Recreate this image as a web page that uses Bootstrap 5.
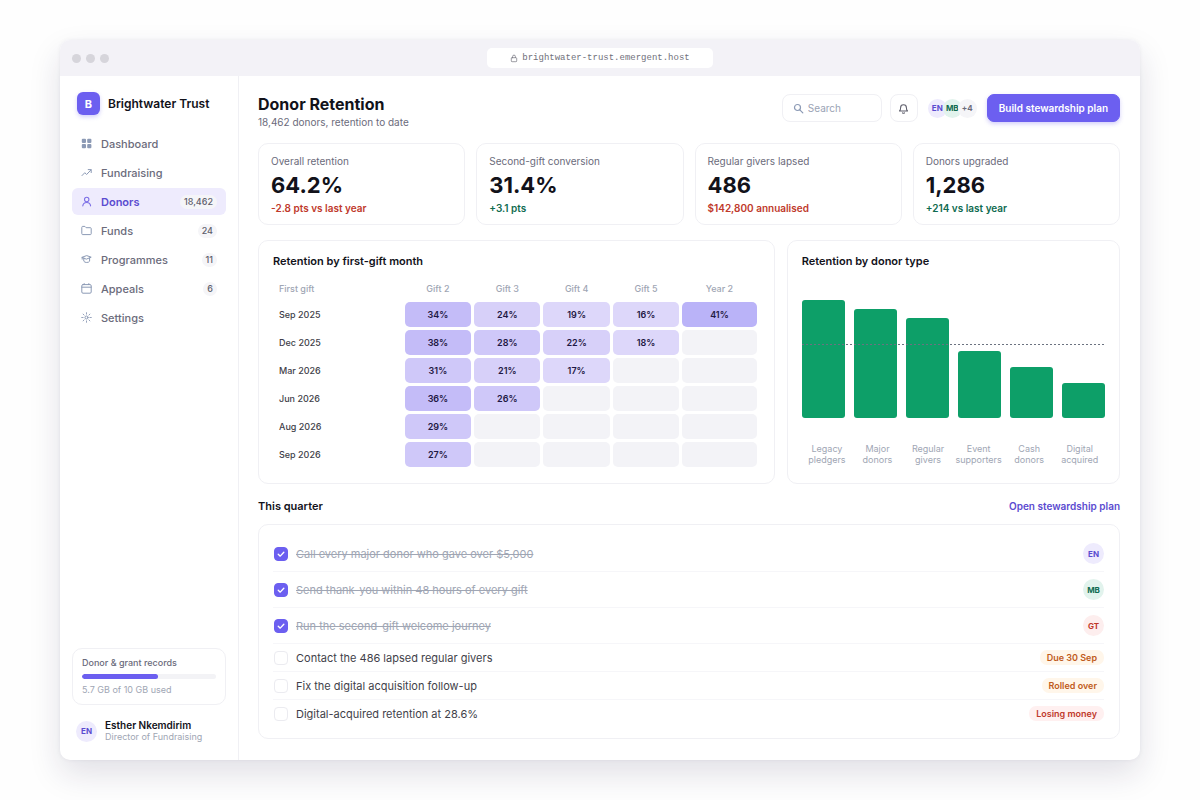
<!DOCTYPE html>
<html lang="en">
<head>
  <meta charset="UTF-8">
  <meta name="viewport" content="width=device-width, initial-scale=1.0">
  <title>Donor Retention - Brightwater Trust</title>
  <link rel="stylesheet" href="https://cdn.jsdelivr.net/npm/bootstrap@5.3.0/dist/css/bootstrap.min.css">
  <style>
    :root {
      --ink: #12121a;
      --body-ink: #3f3f4a;
      --soft: #6b6b7b;
      --muted: #a0a6b4;
      --line: #f0f0f4;
      --accent: #6c5ff0;
      --accent-ink: #5b4bd0;
      --accent-bg: #eeebfd;
      --green: #0f6b50;
      --red: #c0392b;
    }
    body {
      font-family: Inter, "Liberation Sans", sans-serif;
      font-size: 11px;
      line-height: 14px;
      color: var(--ink);
      background: #fefefe;
      padding: 40px 60px;
    }
    a { text-decoration: none; }
    svg { display: block; flex: none; }
    .ico { fill: none; stroke: currentColor; stroke-width: 1.2; stroke-linecap: round; stroke-linejoin: round; }

    /* browser window */
    .window {
      min-height: calc(100vh - 80px);
      border-radius: 10px;
      box-shadow: 0 14px 32px rgba(30, 20, 70, .13), 0 0 4px rgba(30, 20, 70, .06);
    }
    .titlebar { background: #f3f2f7; height: 36px; padding: 0 12px; }
    .titlebar > div { flex: 1; }
    .lights { gap: 5px; }
    .light { width: 9px; height: 9px; background: #d6d5db; }
    .address {
      font-family: "Liberation Mono", monospace;
      font-size: 9px;
      color: #71717c;
      width: 226px;
      height: 20px;
      border-radius: 5px;
    }

    /* sidebar */
    .sidebar { width: 179px; border-right: 1px solid var(--line); padding: 16px 12px 17px; }
    .brand, .user { padding: 0 5px; }
    .logo {
      width: 23px;
      height: 23px;
      border-radius: 6px;
      background: var(--accent);
      box-shadow: 0 2px 4px rgba(108, 95, 240, .3);
    }
    .org { font-size: 12px; font-weight: 600; }
    .side-nav { gap: 2px; margin-top: 15px; }
    .side-nav a {
      height: 27px;
      padding: 0 9px;
      gap: 9px;
      border-radius: 6px;
      color: var(--soft);
      font-weight: 500;
    }
    .side-nav svg { color: #8c9ab5; }
    .side-nav a.active { background: var(--accent-bg); color: var(--accent-ink); font-weight: 600; }
    .side-nav a.active svg { color: #7d70e6; }
    .count { background: #f5f5f8; color: #5f5f6c; font-size: 9px; font-weight: 500; padding: 0 4px; border-radius: 7px; }
    .box { border: 1px solid var(--line); border-radius: 10px; }
    .storage { padding: 7px 9px; }
    .storage .progress { height: 5px; background: #f3f3f6; margin: 4px 0; }
    .storage .progress-bar { background: var(--accent); border-radius: 3px; }
    .user { margin-top: 14px; line-height: 12px; }
    .user-name { font-size: 10px; font-weight: 600; }
    .tiny { font-size: 9px; }
    .text-soft { color: var(--soft); }
    .text-muted2 { color: var(--muted); }

    .avatar {
      width: 21px;
      height: 21px;
      border-radius: 50%;
      font-size: 8px;
      font-weight: 700;
      flex: none;
    }
    .user .avatar { margin-left: -1px; }
    .av-violet { background: var(--accent-bg); color: var(--accent-ink); }
    .av-green { background: #e2f3ed; color: var(--green); }
    .av-red { background: #fdeeee; color: var(--red); }
    .av-gray { background: #f5f5f8; color: var(--soft); }
    .stack { height: 28px; margin: 0 2px; }
    .stack .avatar { width: 19px; height: 19px; }
    .stack .avatar + .avatar { margin-left: -4px; }

    /* page header */
    .content { padding: 18px 20px 20px 19px; min-width: 0; }
    h1 { font-size: 16px; line-height: 21px; font-weight: 700; }
    h2 { font-size: 11px; line-height: 14px; font-weight: 600; }
    .sub { font-size: 10px; }
    .search { width: 100px; height: 28px; border-radius: 8px; padding: 0 10px; color: #8c9ab5; }
    .search input { border: 0; outline: 0; padding: 0; min-width: 0; width: 100%; background: none; font-size: 10px; }
    .search input::placeholder { color: #9aa3b5; opacity: 1; }
    .bell { width: 28px; height: 28px; padding: 0; border-radius: 8px; color: #5f5f6c; background: #fff; }
    .btn-plan {
      --bs-btn-color: #fff;
      --bs-btn-bg: var(--accent);
      --bs-btn-border-color: var(--accent);
      --bs-btn-hover-color: #fff;
      --bs-btn-hover-bg: var(--accent-ink);
      --bs-btn-font-size: 10px;
      --bs-btn-font-weight: 600;
      --bs-btn-line-height: 14px;
      --bs-btn-padding-x: 11px;
      --bs-btn-padding-y: 6px;
      --bs-btn-border-radius: 7px;
      box-shadow: 0 2px 4px rgba(108, 95, 240, .3);
    }

    /* key figures */
    .stats { display: grid; grid-template-columns: repeat(4, 1fr); gap: 11px; margin-top: 14px; }
    .stat { padding: 10px 12px 9px; font-size: 10px; }
    .stat strong { display: block; font-size: 22px; line-height: 27px; margin: 4px 0 2px; }
    .down { color: var(--red); font-weight: 600; }
    .up { color: var(--green); font-weight: 600; }

    .panels { display: grid; grid-template-columns: 31fr 20fr; gap: 12px; margin-top: 15px; }
    .panel { padding: 13px 14px; min-width: 0; }

    /* cohort table */
    .cohort { width: 100%; table-layout: fixed; border-collapse: separate; border-spacing: 3px; font-size: 9px; margin-top: 10px; }
    .cohort th:first-child { width: 27%; text-align: left; padding-left: 3px; }
    .cohort th:last-child { width: 16%; }
    .cohort thead th { height: 18px; color: var(--muted); font-weight: 500; text-align: center; padding: 0 0 2px; }
    .cohort tbody th { color: var(--body-ink); font-weight: 500; }
    .cohort td { height: 25px; padding: 0; text-align: center; font-weight: 600; color: #1f1844; background: #f3f3f7; border-radius: 5px; }
    .cohort .l1 { background: #ddd7fa; }
    .cohort .l2 { background: #d7d0f9; }
    .cohort .l3 { background: #cfc8f9; }
    .cohort .l4 { background: #c4bcf8; }
    .cohort .l5 { background: #bab3f8; }

    /* bar chart */
    .plot { height: 118px; gap: 9px; margin-top: 32px; }
    .bar { flex: 1; background: #0d9f68; border-radius: 3px; }
    .target {
      position: absolute;
      left: 0;
      right: 0;
      bottom: 62%;
      height: 1px;
      background: repeating-linear-gradient(90deg, #6b7280 0 2px, transparent 2px 4px);
    }
    .bar-labels { margin-top: 25px; font-size: 9px; line-height: 11px; color: var(--muted); text-align: center; }
    .bar-labels span { flex: 1 1 0; min-width: 0; }

    /* tasks */
    .section-head { margin: 15px 0 11px; }
    .section-head a { font-size: 10px; font-weight: 600; color: var(--accent-ink); }
    .tasks { padding: 11px 15px 11px 14px; }
    .task { padding: 7px 0 7px 1px; gap: 8px; border-bottom: 1px solid #f6f6f9; }
    .task.open { padding-top: 6px; padding-bottom: 6px; color: var(--body-ink); }
    .task:last-child { border-bottom: 0; }
    .task label { flex: 1; }
    .task .form-check-input { width: 14px; height: 14px; margin: 0; border: 1px solid #ebebf0; border-radius: 4px; flex: none; }
    .task .form-check-input:checked {
      background-color: var(--accent);
      background-image: url("data:image/svg+xml,%3csvg xmlns='http://www.w3.org/2000/svg' viewBox='0 0 14 14'%3e%3cpath fill='none' stroke='%23fff' stroke-width='1.6' stroke-linecap='round' stroke-linejoin='round' d='M3.800 7.300 6.100 9.500 10.300 4.900'/%3e%3c/svg%3e");
      border-color: var(--accent);
    }
    .task.closed label { color: var(--muted); text-decoration: line-through; }
    .tag { font-size: 9px; font-weight: 600; padding: 0 7px; line-height: 15px; border-radius: 7px; }
    .tag-warn { background: #fff6ea; color: #bf5b1c; }
    .tag-bad { background: #fff0f0; color: var(--red); }
  </style>
</head>
<body>
  <div class="window bg-white d-flex flex-column overflow-hidden">
    <div class="titlebar d-flex align-items-center">
      <div class="lights d-flex">
        <span class="light rounded-circle"></span>
        <span class="light rounded-circle"></span>
        <span class="light rounded-circle"></span>
      </div>
      <span class="address bg-white d-flex align-items-center justify-content-center gap-1">
        <svg class="ico" width="8" height="9" viewBox="0 0 8 9"><rect x="1.300" y="3.700" width="5.400" height="4" rx=".8" stroke-width=".7"/><path d="M2.600 3.600V2.500a1.400 1.400 0 0 1 2.800 0v1.100" stroke-width=".7"/></svg>
        brightwater-trust.emergent.host
      </span>
      <div></div>
    </div>

    <div class="d-flex flex-grow-1">
      <aside class="sidebar d-flex flex-column flex-shrink-0">
        <div class="brand d-flex align-items-center gap-2">
          <span class="logo d-flex align-items-center justify-content-center text-white fw-bold">B</span>
          <span class="org">Brightwater Trust</span>
        </div>

        <nav class="side-nav d-flex flex-column">
          <a href="#" class="d-flex align-items-center">
            <svg width="11" height="11" viewBox="0 0 11 11" fill="currentColor"><rect x=".8" y=".8" width="4.200" height="4.200" rx="1"/><rect x="6.200" y=".8" width="4.200" height="4.200" rx="1"/><rect x=".8" y="6.100" width="4.200" height="4.200" rx="1"/><rect x="6.200" y="6.100" width="4.200" height="4.200" rx="1"/></svg>
            Dashboard
          </a>
          <a href="#" class="d-flex align-items-center">
            <svg class="ico" width="11" height="11" viewBox="0 0 11 11"><path d="M1 8.600 3.800 5.700 5.600 7.500 10 2.900M7.200 2.600h3v3" stroke-width="1"/></svg>
            Fundraising
          </a>
          <a href="#" class="active d-flex align-items-center">
            <svg class="ico" width="11" height="11" viewBox="0 0 11 11"><circle cx="5.700" cy="3.500" r="2.200" stroke-width="1.100"/><path d="M1.800 9.900c.2-2 1.700-3.400 3.900-3.400s3.700 1.400 3.900 3.400" stroke-width="1.100"/></svg>
            Donors
            <span class="count ms-auto">18,462</span>
          </a>
          <a href="#" class="d-flex align-items-center">
            <svg class="ico" width="11" height="11" viewBox="0 0 11 11"><path d="M.8 2.200c0-.5.3-.8.8-.8h2.300l1.200 1.300h4.300c.5 0 .8.300.8.800v5.300c0 .5-.3.800-.8.800H1.600c-.5 0-.8-.3-.8-.8z" stroke-width="1"/></svg>
            Funds
            <span class="count ms-auto">24</span>
          </a>
          <a href="#" class="d-flex align-items-center">
            <svg class="ico" width="11" height="11" viewBox="0 0 11 11"><path d="M1.200 3.200 5.700 1.600l4.500 1.600-4.500 1.800zM2.800 4v3.200c.8 1.700 5 1.700 5.800 0V4M1.200 3.400v1.800" stroke-width="1"/></svg>
            Programmes
            <span class="count ms-auto">11</span>
          </a>
          <a href="#" class="d-flex align-items-center">
            <svg class="ico" width="11" height="11" viewBox="0 0 11 11"><rect x=".8" y="1.600" width="9.400" height="8.600" rx="1.200" stroke-width="1"/><path d="M.8 4.200h9.400M3.200.6v1M7.800.6v1" stroke-width="1"/></svg>
            Appeals
            <span class="count ms-auto">6</span>
          </a>
          <a href="#" class="d-flex align-items-center">
            <svg class="ico" width="11" height="11" viewBox="0 0 11 11"><circle cx="5.500" cy="5.500" r="1.500" stroke-width="1"/><path d="M5.500.7v1.400M5.500 8.900v1.400M.7 5.500h1.400M8.900 5.500h1.400M2.100 2.100l1 1M7.900 7.900l1 1M2.100 8.900l1-1M7.900 3.100l1-1" stroke-width=".9"/></svg>
            Settings
          </a>
        </nav>

        <div class="box storage mt-auto">
          <div class="tiny text-soft fw-medium">Donor &amp; grant records</div>
          <div class="progress" role="progressbar" aria-label="Storage used" aria-valuenow="57" aria-valuemin="0" aria-valuemax="100">
            <div class="progress-bar" style="width: 57%"></div>
          </div>
          <div class="tiny text-muted2">5.7 GB of 10 GB used</div>
        </div>
        <div class="user d-flex align-items-center gap-2">
          <span class="avatar av-violet d-flex align-items-center justify-content-center">EN</span>
          <div>
            <div class="user-name">Esther Nkemdirim</div>
            <div class="tiny text-muted2">Director of Fundraising</div>
          </div>
        </div>
      </aside>

      <main class="content flex-grow-1">
        <header class="d-flex align-items-start gap-2">
          <div class="me-auto">
            <h1 class="m-0">Donor Retention</h1>
            <p class="sub m-0 text-soft">18,462 donors, retention to date</p>
          </div>
          <label class="box search d-flex align-items-center gap-1">
            <svg class="ico" width="11" height="11" viewBox="0 0 11 11"><circle cx="4.500" cy="4.500" r="3"/><path d="M6.800 6.800l3 3"/></svg>
            <input type="text" placeholder="Search" aria-label="Search">
          </label>
          <button type="button" class="box bell d-flex align-items-center justify-content-center" aria-label="Notifications">
            <svg class="ico" width="11" height="11" viewBox="0 0 11 11"><path d="M1.500 8h8c-.8-.8-1.100-1.500-1.100-3.300a2.900 2.900 0 0 0-5.800 0C2.600 6.500 2.300 7.200 1.500 8zM4.500 9.800c.5.500 1.500.5 2 0" stroke-width="1.100"/></svg>
          </button>
          <div class="stack d-flex align-items-center">
            <span class="avatar av-violet d-flex align-items-center justify-content-center">EN</span>
            <span class="avatar av-green d-flex align-items-center justify-content-center">MB</span>
            <span class="avatar av-gray d-flex align-items-center justify-content-center">+4</span>
          </div>
          <button type="button" class="btn btn-plan">Build stewardship plan</button>
        </header>

        <section class="stats">
          <div class="box stat"><span class="text-soft">Overall retention</span><strong>64.2%</strong><span class="down">-2.8 pts vs last year</span></div>
          <div class="box stat"><span class="text-soft">Second-gift conversion</span><strong>31.4%</strong><span class="up">+3.1 pts</span></div>
          <div class="box stat"><span class="text-soft">Regular givers lapsed</span><strong>486</strong><span class="down">$142,800 annualised</span></div>
          <div class="box stat"><span class="text-soft">Donors upgraded</span><strong>1,286</strong><span class="up">+214 vs last year</span></div>
        </section>

        <section class="panels">
          <div class="box panel">
            <h2 class="m-0">Retention by first-gift month</h2>
            <table class="cohort">
              <thead>
                <tr><th>First gift</th><th>Gift 2</th><th>Gift 3</th><th>Gift 4</th><th>Gift 5</th><th>Year 2</th></tr>
              </thead>
              <tbody>
                <tr><th>Sep 2025</th><td class="l4">34%</td><td class="l2">24%</td><td class="l1">19%</td><td class="l1">16%</td><td class="l5">41%</td></tr>
                <tr><th>Dec 2025</th><td class="l4">38%</td><td class="l3">28%</td><td class="l2">22%</td><td class="l1">18%</td><td></td></tr>
                <tr><th>Mar 2026</th><td class="l3">31%</td><td class="l2">21%</td><td class="l1">17%</td><td></td><td></td></tr>
                <tr><th>Jun 2026</th><td class="l4">36%</td><td class="l3">26%</td><td></td><td></td><td></td></tr>
                <tr><th>Aug 2026</th><td class="l3">29%</td><td></td><td></td><td></td><td></td></tr>
                <tr><th>Sep 2026</th><td class="l3">27%</td><td></td><td></td><td></td><td></td></tr>
              </tbody>
            </table>
          </div>

          <div class="box panel">
            <h2 class="m-0">Retention by donor type</h2>
            <div class="plot position-relative d-flex align-items-end">
              <div class="bar" style="height: 100%"></div>
              <div class="bar" style="height: 92%"></div>
              <div class="bar" style="height: 85%"></div>
              <div class="bar" style="height: 57%"></div>
              <div class="bar" style="height: 43%"></div>
              <div class="bar" style="height: 30%"></div>
              <div class="target"></div>
            </div>
            <div class="bar-labels d-flex">
              <span>Legacy<br>pledgers</span>
              <span>Major<br>donors</span>
              <span>Regular<br>givers</span>
              <span>Event<br>supporters</span>
              <span>Cash<br>donors</span>
              <span>Digital<br>acquired</span>
            </div>
          </div>
        </section>

        <div class="section-head d-flex align-items-center justify-content-between">
          <h2 class="m-0">This quarter</h2>
          <a href="#">Open stewardship plan</a>
        </div>

        <section class="box tasks">
          <div class="task closed d-flex align-items-center">
            <input class="form-check-input" type="checkbox" id="task1" checked>
            <label for="task1">Call every major donor who gave over $5,000</label>
            <span class="avatar av-violet d-flex align-items-center justify-content-center">EN</span>
          </div>
          <div class="task closed d-flex align-items-center">
            <input class="form-check-input" type="checkbox" id="task2" checked>
            <label for="task2">Send thank-you within 48 hours of every gift</label>
            <span class="avatar av-green d-flex align-items-center justify-content-center">MB</span>
          </div>
          <div class="task closed d-flex align-items-center">
            <input class="form-check-input" type="checkbox" id="task3" checked>
            <label for="task3">Run the second-gift welcome journey</label>
            <span class="avatar av-red d-flex align-items-center justify-content-center">GT</span>
          </div>
          <div class="task open d-flex align-items-center">
            <input class="form-check-input" type="checkbox" id="task4">
            <label for="task4">Contact the 486 lapsed regular givers</label>
            <span class="tag tag-warn">Due 30 Sep</span>
          </div>
          <div class="task open d-flex align-items-center">
            <input class="form-check-input" type="checkbox" id="task5">
            <label for="task5">Fix the digital acquisition follow-up</label>
            <span class="tag tag-warn">Rolled over</span>
          </div>
          <div class="task open d-flex align-items-center">
            <input class="form-check-input" type="checkbox" id="task6">
            <label for="task6">Digital-acquired retention at 28.6%</label>
            <span class="tag tag-bad">Losing money</span>
          </div>
        </section>
      </main>
    </div>
  </div>

  <script src="https://cdn.jsdelivr.net/npm/bootstrap@5.3.0/dist/js/bootstrap.bundle.min.js"></script>
</body>
</html>
